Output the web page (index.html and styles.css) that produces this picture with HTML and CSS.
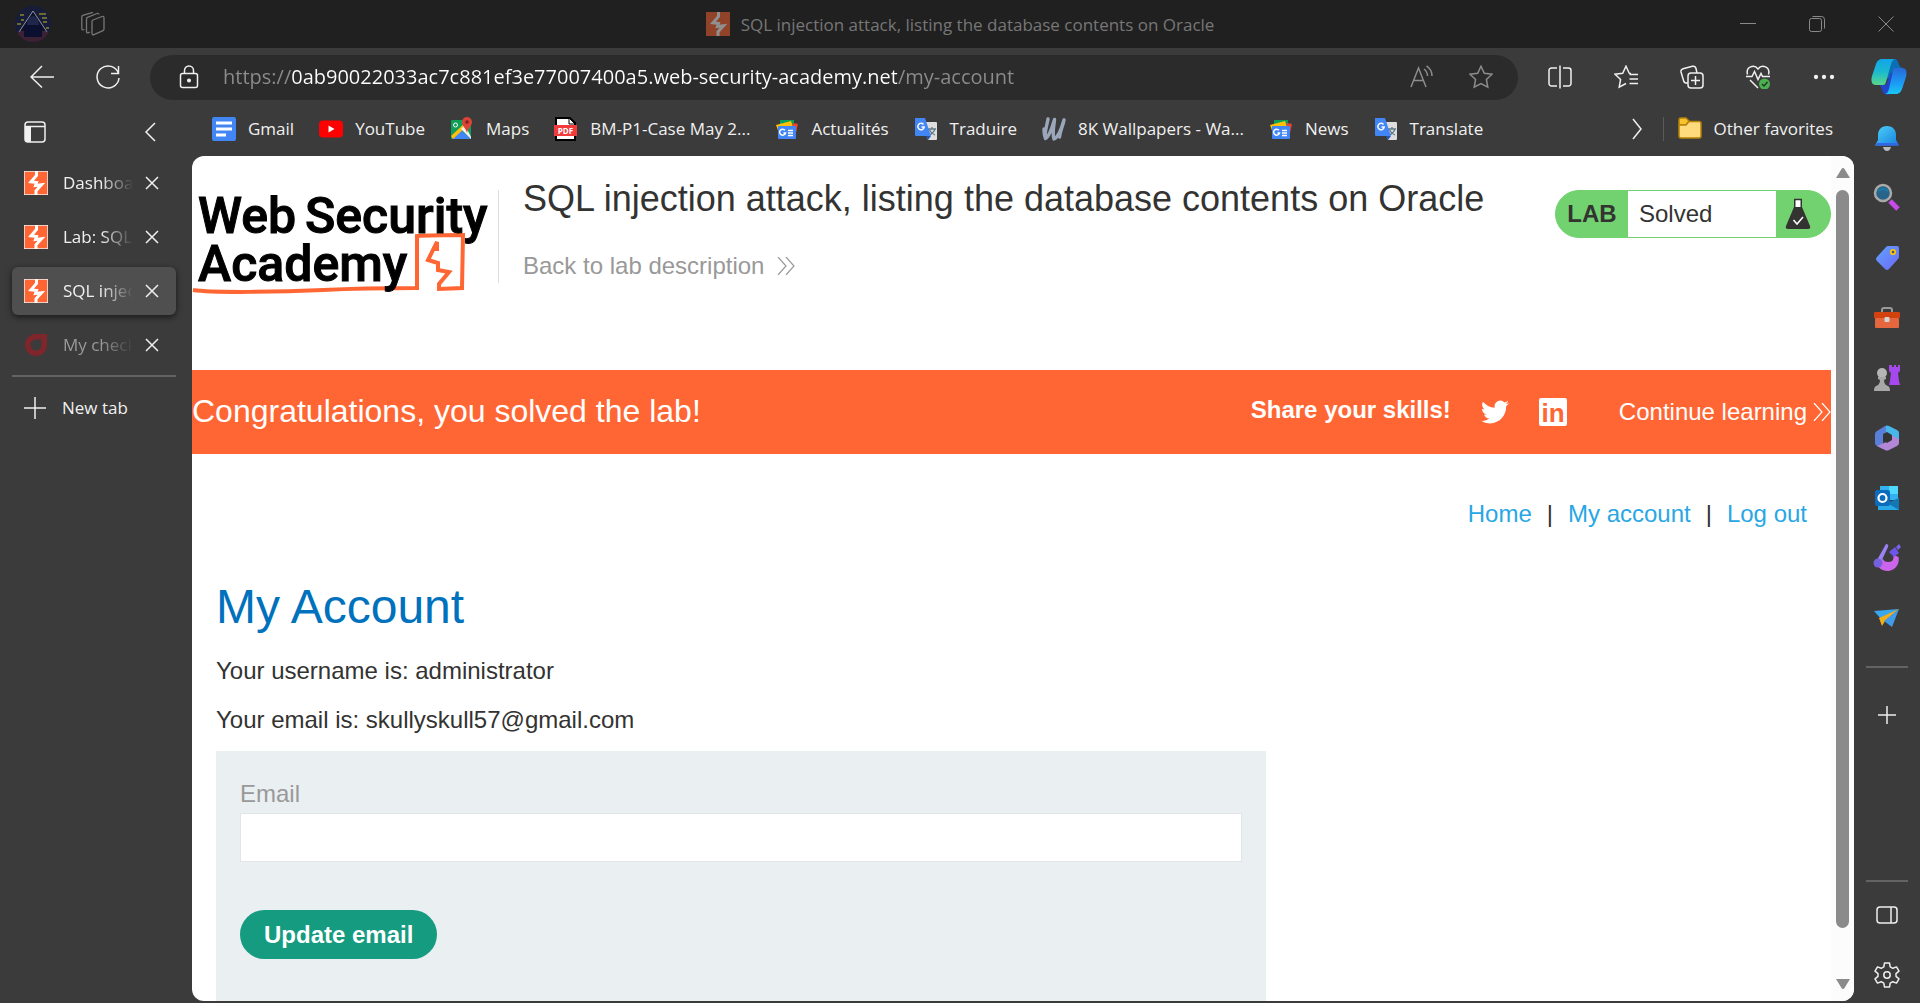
FILE: index.html
```html
<!DOCTYPE html>
<html lang="en">
<head>
<meta charset="utf-8">
<title>SQL injection attack, listing the database contents on Oracle</title>
<link rel="stylesheet" href="styles.css">
</head>
<body>
<svg class="sprite" aria-hidden="true">
  <symbol id="burp" viewBox="0 0 24 24">
    <rect width="24" height="24" fill="#ff6633"/>
    <path d="M12.500 0V4.500L7 10.800l5.500.7-1 3 6-.8L12 19.800V24" fill="none" stroke="#fff" stroke-width="3"/>
  </symbol>
  <symbol id="close" viewBox="0 0 14 14">
    <path d="M1 1l12 12M13 1L1 13" fill="none" stroke="currentColor" stroke-width="1.500"/>
  </symbol>
  <symbol id="news" viewBox="0 0 24 24">
    <path d="M5 3h14v8H5z" fill="#0c9d58"/>
    <path d="M1 8l15-4 3 9-15 3z" fill="#ffc107"/>
    <path d="M18 6l5 1-2 9h-5z" fill="#ea4335"/>
    <rect x="3" y="9" width="18" height="13" rx="1" fill="#4285f4"/>
    <path d="M10 13.300A3 3 0 1 0 10.500 16H8.500M13 13.500h5M13 16h5M13 18.500h5" fill="none" stroke="#fff" stroke-width="1.500"/>
  </symbol>
  <symbol id="translate" viewBox="0 0 24 24">
    <path d="M9 5h13a1 1 0 0 1 1 1v16a1 1 0 0 1-1 1h-8z" fill="#dedede"/>
    <path d="M14 12h8M18 10v2M21 12c-1 3-3 5-6 6M15.500 13c1 2 3 4 5.500 5" fill="none" stroke="#607988" stroke-width="1.300"/>
    <path d="M1 1h10l6 18H2a1 1 0 0 1-1-1z" fill="#4285f4"/>
    <path d="M12 19h5l-3 4z" fill="#2456b5"/>
    <path d="M9.500 7.500A3.200 3.200 0 1 0 10.200 10H7.500" fill="none" stroke="#fff" stroke-width="1.500"/>
  </symbol>
  <symbol id="chevrons" viewBox="0 0 18 18">
    <path d="M1 0l8 9-8 9M9 0l8 9-8 9" fill="none" stroke="currentColor" stroke-width="1.200"/>
  </symbol>
</svg>

<header class="titlebar">
  <div class="titlebar-left">
    <svg class="avatar" viewBox="0 0 36 36" aria-label="Profile">
      <defs><clipPath id="round"><circle cx="18" cy="18" r="18"/></clipPath></defs>
      <g clip-path="url(#round)">
        <rect width="36" height="36" fill="#171d38"/>
        <path d="M5 9h4M28 16h4M24 8h7M2 18h4M27 12h5M6 14h3M31 22h3" stroke="#6c6a2c" stroke-width="2"/>
        <path d="M18 5l14 21H4z" fill="#10121f" stroke="#8d93ad"/>
        <path d="M12 19c0-12 12-12 12 0z" fill="#20254a"/>
        <path d="M0 27c10-4 26-4 36 0v9H0z" fill="#3c2033"/>
        <rect x="9" y="19" width="18" height="12" fill="#0c1030"/>
      </g>
    </svg>
    <svg class="i24 dim" viewBox="0 0 24 24" fill="none" stroke="currentColor" stroke-width="1.300" aria-label="Workspaces">
      <path d="M12 8l9-3.500c1-.4 2 .1 2 1.200V17c0 .8-.3 1.300-1 1.600l-9 4c-1 .4-2-.1-2-1.200V9.500c0-.8.300-1.200 1-1.500z"/>
      <path d="M9 20l-2 .8c-1 .4-1.500 0-1.500-1V7c0-.9.300-1.300 1-1.600L16 1.500c1-.4 2 0 2 1"/>
      <path d="M3.500 17.500c-2 .7-2.700.3-2.700-1V5c0-.9.300-1.300 1-1.600L12 .3"/>
    </svg>
  </div>
  <div class="titlebar-name">
    <svg class="i24 faded"><use href="#burp"/></svg>
    <span>SQL injection attack, listing the database contents on Oracle</span>
  </div>
  <div class="window-controls">
    <button aria-label="Minimize"><svg viewBox="0 0 16 16"><path d="M0 7.500h16"/></svg></button>
    <button aria-label="Restore"><svg viewBox="0 0 16 16"><rect x=".5" y="2.500" width="12" height="13" rx="2"/><path d="M3.500.5h9q3 0 3 3v9"/></svg></button>
    <button aria-label="Close"><svg viewBox="0 0 16 16"><path d="M.5.5l15 15M15.500.5l-15 15"/></svg></button>
  </div>
</header>

<nav class="toolbar">
  <button class="tool" aria-label="Back"><svg class="i24" viewBox="0 0 24 24"><path d="M24 12H1M12 1L1 12l11 10.500"/></svg></button>
  <button class="tool" aria-label="Refresh"><svg class="i24" viewBox="0 0 24 24"><path d="M22.500 8.500A11 11 0 1 0 23 13M22.500 1v7.500H15"/></svg></button>
  <div class="address">
    <svg class="i24" viewBox="0 0 24 24"><rect x="3.500" y="8.500" width="17" height="14" rx="2"/><path d="M7.500 8.500V5.500a4.500 4.500 0 0 1 9 0v3"/><circle cx="12" cy="15.500" r="1.300" fill="currentColor"/></svg>
    <input class="address-input" type="text" aria-label="Address" value="https://0ab90022033ac7c881ef3e77007400a5.web-security-academy.net/my-account">
    <button class="plain" aria-label="Read aloud"><svg class="i24" viewBox="0 0 24 24"><path d="M1 22L8.500 3 16 22M4 15.500h9.500M14 4c2.500 2 3.500 4 3.500 7M16.500.8c4 2.700 5.500 6.200 5.500 10.200"/></svg></button>
    <button class="plain" aria-label="Add to favorites"><svg class="i24" viewBox="0 0 24 24"><path d="M12 1.200l3.300 7 7.700 1-5.600 5.300 1.400 7.700-6.800-3.700-6.800 3.700 1.400-7.700L1 9.200l7.700-1z"/></svg></button>
  </div>
  <button class="tool" aria-label="Split screen"><svg class="i24" viewBox="0 0 24 24"><path d="M12 .5v23M9 3H3.500A2.500 2.500 0 0 0 1 5.500v13A2.500 2.500 0 0 0 3.500 21H9M15 3h5.500A2.500 2.500 0 0 1 23 5.500v13a2.500 2.500 0 0 1-2.500 2.500H15"/></svg></button>
  <button class="tool" aria-label="Favorites"><svg class="i24" viewBox="0 0 24 24"><path d="M17 8.500l-1.800-.3-3.200-7-3.300 7-7.700 1 5.600 5.300-1.400 7.700 6.800-3.700M15.500 9.500H24M15.500 14H24M15.500 18.500H24"/></svg></button>
  <button class="tool" aria-label="Collections"><svg class="i24" viewBox="0 0 24 24"><rect x="8" y="8" width="15" height="15" rx="3"/><path d="M15.500 11v9M11 15.500h9M17 8l-1-4.500c-.5-2-1.500-2.700-3.500-2.200L3 3.700C1.200 4.200.600 5.200 1 7l2.700 9c.5 1.700 1.800 2.300 4.300 2"/></svg></button>
  <button class="tool" aria-label="Browser essentials"><svg class="i24" viewBox="0 0 24 24"><path d="M1.500 9.500C-.5 2 8-1.500 12 4c4-5.500 12.500-2 10.500 5.500M0 11.500h6l2.500-5 3.500 8 3-6 1.500 3H24M4 15l8 8"/><circle cx="18.500" cy="19" r="5.500" fill="#4caf50" stroke="none"/><path d="M16 19l2 2 3.500-4" stroke="#203a20"/></svg></button>
  <button class="tool" aria-label="Settings and more"><svg class="i24" viewBox="0 0 24 24"><g fill="currentColor"><circle cx="4" cy="12" r="1.400"/><circle cx="12" cy="12" r="1.400"/><circle cx="20" cy="12" r="1.400"/></g></svg></button>
  <button class="tool tool-copilot" aria-label="Copilot"><svg class="i36" viewBox="0 0 36 36">
    <defs>
      <linearGradient id="cp1" x1="0" y1="0" x2="0" y2="1"><stop offset="0" stop-color="#12a5e8"/><stop offset=".5" stop-color="#1cb9cf"/><stop offset="1" stop-color="#59d88b"/></linearGradient>
      <linearGradient id="cp2" x1="0" y1="0" x2="0" y2="1"><stop offset="0" stop-color="#2868d8"/><stop offset=".6" stop-color="#1b9cf5"/><stop offset="1" stop-color="#19c7f2"/></linearGradient>
    </defs>
    <g stroke="none">
      <path d="M18 0h6c4 0 3 9 8 9l-8 1-3 8-8 3z" fill="#0b6fb5"/>
      <path d="M9 26h6l5-13 5 8-5 14c-6 2-8-1-9-4z" fill="#2146c9"/>
      <path d="M12 0h13c-3 0-4 2-5 5l-5 18c-.6 2-1 3-3 3H5c-5 0-5-5-4-9L5 5c1-3 3-5 7-5z" fill="url(#cp1)"/>
      <path d="M24 9h7c5 0 5 5 4 9l-4 12c-1 3-3 5-7 5H13c3 0 4-2 5-5l4-18c.5-2 .8-3 2-3z" fill="url(#cp2)"/>
    </g></svg></button>
</nav>

<div class="workspace">
  <aside class="tabs">
    <div class="tabs-head">
      <button class="plain" aria-label="Tab actions"><svg class="i22" viewBox="0 0 22 22"><rect x="1" y="1" width="20" height="20" rx="3"/><path d="M1 5.500h20"/><path d="M1 5h6v16H3q-2 0-2-2z" fill="currentColor" stroke="none"/></svg></button>
      <button class="plain" aria-label="Collapse pane"><svg class="i22" viewBox="0 0 22 22"><path d="M16 2L7 11l9 9"/></svg></button>
    </div>
    <div class="tab"><svg class="i24"><use href="#burp"/></svg><a class="tab-name" href="#">Dashboard</a><button class="plain" aria-label="Close tab"><svg class="i14"><use href="#close"/></svg></button></div>
    <div class="tab"><svg class="i24"><use href="#burp"/></svg><a class="tab-name" href="#">Lab: SQL injection</a><button class="plain" aria-label="Close tab"><svg class="i14"><use href="#close"/></svg></button></div>
    <div class="tab tab-active"><svg class="i24"><use href="#burp"/></svg><a class="tab-name" href="#">SQL injection attack</a><button class="plain" aria-label="Close tab"><svg class="i14"><use href="#close"/></svg></button></div>
    <div class="tab tab-asleep"><svg class="i24" viewBox="0 0 24 24"><path d="M12 1h11v11A11 11 0 1 1 12 1z" fill="#7e262c" stroke="none"/><path d="M12 6.500h5.500V12A5.500 5.500 0 1 1 12 6.500z" fill="#3b3b3b" stroke="none"/></svg><a class="tab-name" href="#">My checklist</a><button class="plain" aria-label="Close tab"><svg class="i14"><use href="#close"/></svg></button></div>
    <hr class="tabs-rule">
    <button class="new-tab"><svg class="i22" viewBox="0 0 22 22"><path d="M11 0v22M0 11h22"/></svg><span>New tab</span></button>
  </aside>

  <div class="center">
    <nav class="favorites">
      <a href="#"><svg class="i24" viewBox="0 0 24 24"><rect width="24" height="24" rx="2" fill="#4285f4"/><path d="M4 6h16M4 12h16M4 18h10" stroke="#fff" stroke-width="3"/></svg>Gmail</a>
      <a href="#"><svg class="i24" viewBox="0 0 24 24"><rect y="3.500" width="24" height="17" rx="4" fill="#f00"/><path d="M9.500 8.500v7l6-3.500z" fill="#fff"/></svg>YouTube</a>
      <a href="#"><svg class="i24" viewBox="0 0 24 24"><rect x="1" y="3" width="20" height="19" rx="1" fill="#0f9d58"/><path d="M2 22l9-9 10 9z" fill="#4285f4"/><path d="M1 19L16 5l2 3L3 22z" fill="#ffc107"/><path d="M11 12l4-4 6 12v2z" fill="#f1f1f1"/><circle cx="5.500" cy="8" r="2" fill="none" stroke="#fff"/><path d="M17 0a5 5 0 0 1 5 5c0 4-4 6-5 11-1-5-5-7-5-11a5 5 0 0 1 5-5z" fill="#db4437"/><circle cx="17" cy="5" r="1.800" fill="#7b231e"/></svg>Maps</a>
      <a href="#"><svg class="i24" viewBox="0 0 24 24"><path d="M2 1h14l5 5v17H2z" fill="#fff" stroke="#000" stroke-width="2"/><path d="M15 1v6h6z" stroke="#000" fill="#fff"/><rect y="8" width="23" height="11" fill="#f23c3c"/><text class="pdf-text" x="11.500" y="16.500" text-anchor="middle">PDF</text></svg>BM-P1-Case May 2...</a>
      <a href="#"><svg class="i24"><use href="#news"/></svg>Actualités</a>
      <a href="#"><svg class="i24"><use href="#translate"/></svg>Traduire</a>
      <a href="#"><svg class="i24" viewBox="0 0 24 24"><path d="M6 2C5 9 2 15 3.500 21.500 7 20 10 11 12.500 2.500 12 9 10 16 12 22c5-2 8-12 10-19-1 6-4 11-4.500 17M2 12c0 3 0 6 1.500 9" fill="none" stroke="#9aa7bb" stroke-width="3.400" stroke-linecap="round" stroke-linejoin="round"/></svg>8K Wallpapers - Wa...</a>
      <a href="#"><svg class="i24"><use href="#news"/></svg>News</a>
      <a href="#"><svg class="i24"><use href="#translate"/></svg>Translate</a>
      <span class="favorites-more">
        <button class="plain" aria-label="More favorites"><svg class="i22" viewBox="0 0 22 22"><path d="M7 1l8 10-8 10"/></svg></button>
        <a class="folder" href="#"><svg class="i24" viewBox="0 0 24 24"><path d="M1 3q0-2 2-2h5l3 3-3 4H1z" fill="#f7c331" stroke="#b58306" stroke-width="1.500"/><path d="M1 8h7l3-3.500h10q2 0 2 2V19q0 2-2 2H3q-2 0-2-2z" fill="#ffdb7d" stroke="#b58306" stroke-width="1.500"/></svg>Other favorites</a>
      </span>
    </nav>

    <div class="viewport">
      <main class="page">
        <header class="lab-header">
          <a class="logo" href="#" aria-label="Web Security Academy">
            <svg class="logo-art" viewBox="0 0 304 110">
              <path d="M1 100c20 3 85 2 130 0 40-2 70-2 94-2V46c14-1 32-1 46-1l-1 53-23 1v-5l10-12-11-2v-7l-10-3 9-18v9" fill="none" stroke="#ff6633" stroke-width="4"/>
              <text class="logo-text" x="6" y="43">Web</text>
              <text class="logo-text" x="113" y="43">Security</text>
              <text class="logo-text" x="6" y="91">Academy</text>
            </svg>
          </a>
          <div class="lab-title">
            <h2>SQL injection attack, listing the database contents on Oracle</h2>
            <a href="#">Back to lab description <svg class="i18"><use href="#chevrons"/></svg></a>
          </div>
          <div class="badge">
            <span class="badge-label">LAB</span>
            <span class="badge-state">Solved</span>
            <svg class="badge-flask" viewBox="-4 0 54 46"><path d="M14 8h8v8l8 19q1 3-2 3H8q-3 0-2-3l8-19z" fill="#333332"/><path d="M15.500 9h5v7h-5z" fill="#fff"/><path d="M14 8.500h8" stroke="#333332" stroke-width="1.500"/><path d="M13.500 29l3.500 4 6-7" fill="none" stroke="#fff" stroke-width="1.500"/></svg>
          </div>
        </header>

        <section class="banner">
          <h4>Congratulations, you solved the lab!</h4>
          <div class="banner-side">
            <strong>Share your skills!</strong>
            <a class="social" href="#" aria-label="Twitter"><svg viewBox="0 0 24 24"><path fill="#fff" d="M23.950 4.570a10 10 0 0 1-2.820.77 4.960 4.960 0 0 0 2.160-2.720c-.95.550-2 .95-3.130 1.180a4.920 4.920 0 0 0-8.380 4.480C7.690 8.090 4.070 6.130 1.640 3.160a4.820 4.820 0 0 0-.67 2.470c0 1.710.87 3.210 2.190 4.100a4.900 4.900 0 0 1-2.230-.62v.06a4.920 4.920 0 0 0 3.950 4.830 5 5 0 0 1-2.210.080 4.940 4.940 0 0 0 4.600 3.420A9.870 9.870 0 0 1 0 19.540a13.990 13.990 0 0 0 7.560 2.210c9.050 0 14-7.500 14-13.980 0-.21 0-.42-.02-.63a9.940 9.940 0 0 0 2.460-2.550z"/></svg></a>
            <a class="social" href="#" aria-label="LinkedIn"><svg viewBox="0 0 28 28"><rect width="28" height="28" rx="2" fill="#fff"/><text class="in-text" x="14" y="24" text-anchor="middle">in</text></svg></a>
            <a class="continue" href="#">Continue learning <svg class="i18"><use href="#chevrons"/></svg></a>
          </div>
        </section>

        <nav class="page-nav"><a href="#">Home</a><span>|</span><a href="#">My account</a><span>|</span><a href="#">Log out</a></nav>

        <section class="account">
          <h1>My Account</h1>
          <p>Your username is: administrator</p>
          <p>Your email is: skullyskull57@gmail.com</p>
          <form class="email-form">
            <label for="email">Email</label>
            <input id="email" type="email">
            <button type="button">Update email</button>
          </form>
        </section>
      </main>
      <div class="scrollbar">
        <svg viewBox="0 0 14 10"><path d="M7 0q1 0 1.500 1L14 10H0L5.500 1Q6 0 7 0z"/></svg>
        <div class="track"><div class="thumb"></div></div>
        <svg viewBox="0 0 14 10"><path d="M7 10q-1 0-1.500-1L0 0h14L8.500 9Q8 10 7 10z"/></svg>
      </div>
    </div>
  </div>

  <aside class="sidebar">
    <button aria-label="Notifications"><svg viewBox="0 0 30 30"><defs><linearGradient id="bell" x1="0" y1="0" x2="1" y2="1"><stop offset="0" stop-color="#4fd0f8"/><stop offset="1" stop-color="#1381e0"/></linearGradient></defs><path d="M11 24h8q-1 4-4 4t-4-4z" fill="#b9bcc0"/><path d="M15 3c6 0 9 4 9 9v5l3 5.500H3L6 17v-5c0-5 3-9 9-9z" fill="url(#bell)"/><path d="M5 20h20l1.500 2.500h-23z" fill="#3467e8"/></svg></button>
    <button aria-label="Search"><svg viewBox="0 0 30 30"><path d="M18 18l8 8" stroke="#c64be8" stroke-width="5"/><circle cx="11" cy="10" r="8" fill="#28638a" stroke="#aaa9a7" stroke-width="2.500"/><path d="M6 8q5-4 10 0" fill="none" stroke="#1b7ba4" stroke-width="2"/></svg></button>
    <button aria-label="Shopping"><svg viewBox="0 0 30 30"><defs><linearGradient id="tag" x1="0" y1="0" x2="1" y2="1"><stop offset="0" stop-color="#61a4ff"/><stop offset="1" stop-color="#6c68f5"/></linearGradient></defs><path d="M16 3h9q2 0 2 2v9q0 1-1 2L17 26q-2 2-4 0l-8-8q-2-2 0-4L14 4q1-1 2-1z" fill="url(#tag)"/><circle cx="21" cy="9" r="2.200" fill="#4b4a84" stroke="#f7c600" stroke-width="1.800"/></svg></button>
    <button aria-label="Tools"><svg viewBox="0 0 30 30"><path d="M10 9V7q0-2 2-2h6q2 0 2 2v2" fill="none" stroke="#999" stroke-width="2"/><rect x="3" y="15" width="24" height="10" rx="1" fill="#e4673d"/><path d="M3 9h24q1 0 1 1v5H2v-5q0-1 1-1z" fill="#d1420f"/><rect x="12.500" y="14" width="5" height="5" rx="1" fill="#d5d5d5"/></svg></button>
    <button aria-label="Games"><svg viewBox="0 0 30 30"><path d="M18 2h2v2h2V2h2v2h2V2h2v6l-2 2 1 8 1 4H17l1-4 1-8-2-2V2z" fill="#a549ee"/><circle cx="10" cy="10" r="5" fill="#b5b5b5"/><path d="M6 14h8v2l-2 1q0 5 4 6 2 1 2 5H2q0-4 2-5 4-1 4-6l-2-1z" fill="#a8a8a8"/></svg></button>
    <button aria-label="Microsoft 365"><svg viewBox="0 0 30 30">
      <path d="M13 3q2-1 4 0l8 4q2 1 2 3v8l-8-5-5-3z" fill="#47b7e9"/>
      <path d="M13 3l-8 5q-2 1-2 3v9q0 2 2 3l6 3V12l3-2V3z" fill="#5a7fd8"/>
      <path d="M27 16v4q0 2-2 3l-8 4q-2 1-4 0l-8-4 14-6v-5z" fill="#b287d6"/>
      <path d="M11 11l4-2 5 3v5l-5 3-4-3z" fill="#343434"/></svg></button>
    <button aria-label="Outlook"><svg viewBox="0 0 30 30"><path d="M8 3h18v14H8z" fill="#32b2ee"/><path d="M17 3h9v8h-9z" fill="#50d9ff"/><path d="M6 15l10 6 11-6v12H6z" fill="#28a8e8"/><path d="M15 20l12-5v12z" fill="#1477b5"/><rect x="3" y="7" width="15" height="16" rx="2" fill="#0b6cbd"/><circle cx="10.500" cy="15" r="4" fill="none" stroke="#fff" stroke-width="2.200"/></svg></button>
    <button aria-label="Designer"><svg viewBox="0 0 30 30"><path d="M4 19a11.500 11.500 0 0 0 22.500-5l-5.500-2.500q2 7.500-5 7.500-4 0-5-3z" fill="#cd65ec"/><path d="M14 1q3 0 2 3L9 19l-4-2z" fill="#9a82f2"/><circle cx="6" cy="20" r="4.500" fill="#7561de"/><path d="M17 9l6-5 4 6-5 4z" fill="#6c55e8"/><path d="M24 4l3-3 2 3-3 3z" fill="#7b60ee"/></svg></button>
    <button aria-label="Drop"><svg viewBox="0 0 30 30"><path d="M2 8l25-2-18 10z" fill="#39a7ed"/><path d="M27 6L7 15l3 8 3-5z" fill="#f4ae18"/><path d="M27 6l-7 18-8-6z" fill="#3f9ced"/></svg></button>
    <hr class="sidebar-rule">
    <button aria-label="Customize"><svg viewBox="0 0 30 30"><path d="M15 6v18M6 15h18" stroke="#eee" stroke-width="1.500"/></svg></button>
    <div class="sidebar-foot">
      <hr>
      <button aria-label="Toggle sidebar"><svg viewBox="0 0 30 30"><rect x="5" y="7" width="20" height="16" rx="3" fill="none" stroke="#eee" stroke-width="1.500"/><path d="M19 7v16" stroke="#eee" stroke-width="1.500"/></svg></button>
      <button aria-label="Sidebar settings"><svg viewBox="0 0 30 30" fill="none" stroke="#eee" stroke-width="1.500"><path d="M12.500 3h5l.7 3.800 2.600 1.500 3.700-1.400 2.500 4.300-3 2.500v2.600l3 2.500-2.500 4.300-3.700-1.400-2.600 1.500-.7 3.800h-5l-.7-3.800-2.600-1.500-3.700 1.400L3 18.800l3-2.500v-2.600l-3-2.500 2.500-4.300 3.700 1.400 2.600-1.500z" stroke-linejoin="round"/><circle cx="15" cy="15" r="3.200"/></svg></button>
    </div>
  </aside>
</div>
</body>
</html>
```
FILE: styles.css
```css
* { box-sizing: border-box; }

body {
  display: flex;
  flex-direction: column;
  height: 100vh;
  margin: 0;
  overflow: hidden;
  background: #3b3b3b;
  color: #f0f0f0;
  font: 17px/24px "Open Sans", "Noto Sans", sans-serif;
}

a { color: inherit; text-decoration: none; }
svg { display: block; flex: none; }
h1, h2, h4, p { margin: 0; font-weight: 400; }
hr { margin: 0; border: 0; }

button {
  display: flex;
  align-items: center;
  justify-content: center;
  padding: 0;
  border: 0;
  background: none;
  color: inherit;
  font: inherit;
}

.sprite { position: absolute; width: 0; height: 0; }
.i14 { width: 14px; height: 14px; }
.i18 { width: 18px; height: 18px; }
.i22 { width: 22px; height: 22px; }
.i24 { width: 24px; height: 24px; }
.i36 { width: 36px; height: 36px; }

/* Title bar */
.titlebar {
  display: grid;
  grid-template-columns: 1fr auto 1fr;
  align-items: center;
  flex: none;
  height: 48px;
  background: #202020;
  color: #777;
}
.titlebar-left { display: flex; align-items: center; gap: 30px; padding-left: 15px; }
.avatar { width: 36px; height: 36px; }
.dim { color: #777; }
.titlebar-name { display: flex; align-items: center; gap: 11px; }
.titlebar-name span { padding-top: 2px; }
.faded { opacity: .5; }
.window-controls { display: flex; justify-content: flex-end; }
.window-controls button { width: 69px; height: 48px; }
.window-controls svg { width: 16px; height: 16px; fill: none; stroke: #8a8a8a; }

/* Toolbar */
.toolbar { display: flex; align-items: center; flex: none; height: 58px; padding-left: 9px; }
.tool { width: 66px; height: 48px; }
.tool-copilot { width: 63px; }
.tool svg, .address svg, .tabs svg, .favorites-more > button svg { fill: none; stroke: currentColor; stroke-width: 1.5; }
.address {
  display: flex;
  align-items: center;
  flex: 1;
  height: 45px;
  margin: 0 9px;
  padding: 0 25px 0 27px;
  border-radius: 23px;
  background: #2b2b2b;
}
.address-input {
  flex: 1;
  min-width: 0;
  margin-left: 22px;
  padding: 0;
  border: 0;
  outline: 0;
  background: linear-gradient(90deg, #8c8c8c 68px, #fff 68px, #fff 674px, #8c8c8c 674px);
  background-clip: text;
  -webkit-background-clip: text;
  color: transparent;
  font: 20px/28px "Open Sans", "Noto Sans", sans-serif;
}
.address .plain { margin-left: 35px; color: #8c8c8c; }

/* Vertical tabs */
.workspace { display: flex; flex: 1; min-height: 0; }
.tabs { flex: none; width: 192px; padding: 0 16px 0 12px; }
.tabs-head { display: flex; justify-content: space-between; align-items: center; height: 53px; padding: 0 15px 1px 12px; }
.tab { display: flex; align-items: center; height: 48px; margin-bottom: 6px; padding: 0 17px 0 12px; border-radius: 6px; }
.tab-name {
  flex: 1;
  margin: 0 13px 0 15px;
  overflow: hidden;
  white-space: nowrap;
  mask-image: linear-gradient(90deg, #000 55%, transparent 102%);
}
.tab-active { background: #4f4f4f; box-shadow: 0 2px 6px rgba(0, 0, 0, .6); }
.tab-asleep .tab-name { color: #9a9a9a; }
.tabs-rule { height: 2px; background: #636363; margin: 6px 0 19px; }
.new-tab { gap: 16px; padding-left: 12px; }

/* Favorites bar */
.center { display: flex; flex-direction: column; flex: 1; min-width: 0; }
.favorites { display: flex; align-items: center; gap: 25px; flex: none; height: 50px; padding: 0 21px 4px 20px; white-space: nowrap; }
.favorites a { display: flex; align-items: center; gap: 12px; }
.favorites-more { display: flex; align-items: center; gap: 15px; margin-left: auto; }
.favorites .folder { padding-left: 14px; border-left: 1px solid #5a5a5a; }
.pdf-text { font: 700 8px "Open Sans", sans-serif; fill: #fff; }

/* Web page */
.viewport {
  display: flex;
  flex: 1;
  min-height: 0;
  margin-bottom: 2px;
  overflow: hidden;
  border-radius: 12px;
  background: #fff;
}
.page { flex: 1; min-width: 0; color: #333332; font: 24px/36px "Liberation Sans", Arial, sans-serif; }
.page a { display: inline-flex; align-items: center; }

.lab-header { display: flex; align-items: flex-start; height: 214px; padding-top: 34px; }
.logo { flex: none; width: 307px; height: 93px; border-right: 1px solid #dedede; }
.page .logo { align-items: flex-start; }
.logo-art { width: 304px; height: 110px; overflow: visible; }
.logo-text { font: 500 50px "Roboto", sans-serif; fill: #000; stroke: #000; stroke-width: 1px; }
.lab-title { flex: 1; padding-left: 24px; }
.lab-title h2 { margin-top: -12px; font-size: 36px; line-height: 42px; }
.lab-title a { gap: 13px; margin-top: 28px; color: #999; }

.badge { display: flex; flex: none; width: 276px; height: 48px; border: 1px solid #71d26f; border-radius: 24px; background: #71d26f; overflow: hidden; line-height: 46px; }
.badge-label { width: 72px; font-weight: 700; text-align: center; }
.badge-state { flex: 1; padding-left: 11px; background: #fff; }
.badge-flask { width: 54px; height: 46px; }

.banner { display: flex; justify-content: space-between; align-items: center; height: 84px; background: #ff6633; color: #fff; }
.banner h4 { padding-bottom: 2px; font-size: 32px; line-height: 40px; }
.banner-side { display: flex; align-items: center; }
.banner strong { margin-right: 30px; padding-bottom: 4px; }
.social { margin-right: 30px; }
.social svg { width: 28px; height: 28px; }
.in-text { font: 700 26px "Liberation Sans", sans-serif; fill: #ff6633; }
.continue { gap: 6px; margin-left: 22px; }

.page-nav { display: flex; justify-content: flex-end; gap: 15px; padding: 42px 24px 0; }
.page-nav a { color: #29a7e4; }

.account { padding: 45px 24px 0; }
.account h1 { margin-bottom: 16px; color: #0071bd; font-size: 48px; line-height: 60px; }
.account p { margin-bottom: 13px; }
.email-form { width: 1050px; max-width: 100%; height: 400px; padding: 25px 24px; background: #eaeff2; }
.email-form label { display: block; color: #999; }
.email-form input { display: block; width: 100%; height: 49px; margin: 1px 0 48px; padding: 0 12px; border: 1px solid #e2e5e7; background: #fff; font: inherit; }
.email-form button { height: 49px; padding: 0 24px; border-radius: 25px; background: #159b80; color: #fff; font-weight: 700; }

.scrollbar { display: flex; flex-direction: column; align-items: center; gap: 12px; flex: none; width: 23px; padding: 12px 0; background: #fcfcfc; }
.scrollbar svg { width: 14px; height: 10px; fill: #8b8b8b; }
.track { flex: 1; width: 13px; }
.thumb { height: 95%; border-radius: 7px; background: #8b8b8b; }

/* Sidebar */
.sidebar { display: flex; flex-direction: column; align-items: center; gap: 30px; flex: none; width: 66px; padding: 17px 0 13px; }
.sidebar svg { width: 30px; height: 30px; }
.sidebar hr { width: 42px; height: 2px; background: #636363; }
.sidebar .sidebar-rule { margin: 3px 0 2px; }
.sidebar-foot { display: flex; flex-direction: column; gap: 30px; margin-top: auto; align-items: center; }
.sidebar-foot hr { margin-bottom: -12px; }
```
